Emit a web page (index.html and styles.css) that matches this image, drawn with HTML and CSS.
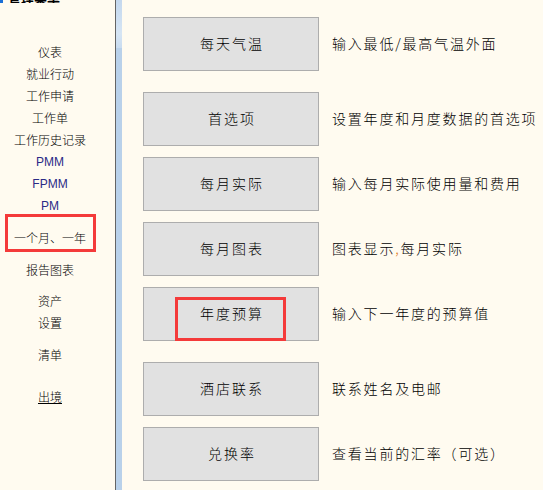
FILE: index.html
```html
<!DOCTYPE html>
<html lang="zh">
<head>
<meta charset="utf-8">
<title>管理菜单</title>
<link rel="stylesheet" href="styles.css">
</head>
<body>
<div class="app">
  <aside class="sidebar">
    <div class="title"><span class="title-inner"><span class="title-icon"></span><span class="title-text">管理菜单</span></span></div>
    <nav class="nav">
      <div class="item">仪表</div>
      <div class="item">就业行动</div>
      <div class="item">工作申请</div>
      <div class="item">工作单</div>
      <div class="item">工作历史记录</div>
      <div class="item latin">PMM</div>
      <div class="item latin">FPMM</div>
      <div class="item latin">PM</div>
      <div class="item hl g10">一个月、一年<span class="mark mark-nav"></span></div>
      <div class="item g10">报告图表</div>
      <div class="item g9">资产</div>
      <div class="item">设置</div>
      <div class="item g10">清单</div>
      <div class="item g20 link">出境</div>
    </nav>
  </aside>
  <div class="divider"></div>
  <div class="strip"><div class="strip-top"></div></div>
  <main class="main">
    <div class="row"><div class="btn">每天气温</div><div class="desc">输入最低/最高气温外面</div></div>
    <div class="row wide"><div class="btn">首选项</div><div class="desc">设置年度和月度数据的首选项</div></div>
    <div class="row"><div class="btn">每月实际</div><div class="desc">输入每月实际使用量和费用</div></div>
    <div class="row"><div class="btn">每月图表</div><div class="desc">图表显示<span class="comma">,</span>每月实际</div></div>
    <div class="row"><div class="btn">年度预算<span class="mark mark-btn"></span></div><div class="desc">输入下一年度的预算值</div></div>
    <div class="row wide"><div class="btn">酒店联系</div><div class="desc">联系姓名及电邮</div></div>
    <div class="row"><div class="btn">兑换率</div><div class="desc">查看当前的汇率（可选）</div></div>
  </main>
</div>
</body>
</html>
```
FILE: styles.css
```css
html, body {
  margin: 0;
  padding: 0;
  background: #fffbf0;
}
body {
  font-family: "Noto Sans CJK SC", "Liberation Sans", sans-serif;
  font-weight: 300;
  color: #000;
  width: 543px;
  height: 490px;
  overflow: hidden;
}
.app {
  display: flex;
  height: 490px;
}
.sidebar {
  width: 115px;
  flex: none;
  display: flex;
  flex-direction: column;
}
.title {
  height: 3px;
  overflow: hidden;
  display: flex;
  align-items: flex-end;
}
.title-inner {
  display: flex;
  align-items: flex-end;
  gap: 5px;
  font-size: 13px;
  line-height: 13px;
  margin-bottom: -1px;
  font-weight: bold;
}
.title-icon {
  display: inline-block;
  width: 3px;
  height: 13px;
  background: #1b6fd6;
}
.nav {
  width: 100px;
  padding-top: 38px;
  display: flex;
  flex-direction: column;
  align-items: center;
}
.item {
  height: 22px;
  line-height: 22px;
  font-size: 12px;
  text-align: center;
  white-space: nowrap;
  position: relative;
}
.item.latin {
  font-family: "Liberation Sans", sans-serif;
  font-weight: 400;
  color: #2a2a86;
}
.g9 { margin-top: 9px; }
.g10 { margin-top: 10px; }
.g20 { margin-top: 20px; }
.link { text-decoration: underline; }
.hl { position: relative; }
.mark {
  position: absolute;
  border: 3px solid #f43a3a;
  box-sizing: border-box;
  pointer-events: none;
}
.mark-nav {
  top: -13px;
  left: -9px;
  width: 91px;
  height: 38px;
}
.divider {
  width: 1px;
  flex: none;
  background: #646464;
}
.strip {
  width: 6px;
  flex: none;
  background: #b9d1ea;
  display: flex;
  flex-direction: column;
}
.strip-top {
  height: 48px;
  background: linear-gradient(to bottom, #c4d8ee 0%, #d6e5f4 70%, #c9dcf0 100%);
}
.main {
  flex: 1;
  padding: 17px 0 0 21px;
  display: flex;
  flex-direction: column;
  gap: 11px;
}
.row {
  display: flex;
  align-items: center;
  gap: 13px;
}
.row.wide { margin-top: 10px; }
.btn {
  position: relative;
  width: 176px;
  height: 54px;
  box-sizing: border-box;
  border: 1px solid #adadad;
  background: #e1e1e1;
  display: flex;
  align-items: center;
  justify-content: center;
  font-size: 14px;
  line-height: 14px;
  letter-spacing: 2px;
  text-indent: 2px;
  padding-bottom: 3px;
}
.desc {
  font-size: 14px;
  line-height: 14px;
  letter-spacing: 1.8px;
  white-space: nowrap;
  margin-bottom: 3px;
}
.comma { color: #e07a1f; }
.mark-btn {
  top: 9px;
  left: 31px;
  width: 111px;
  height: 44px;
}
```
